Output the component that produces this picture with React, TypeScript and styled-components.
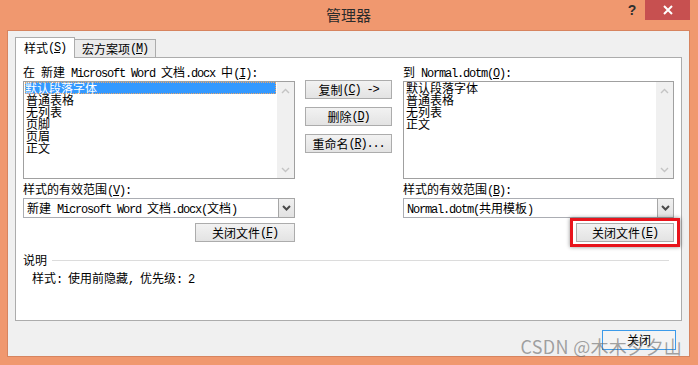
import React from 'react';
import styled, { createGlobalStyle } from 'styled-components';

const GlobalStyle = createGlobalStyle`
  body {
    margin: 0;
    font-family: "Noto Sans CJK SC", "Noto Sans", sans-serif;
    font-size: 12px;
    color: #000;
  }
`;

const Window = styled.div`
  position: relative;
  box-sizing: border-box;
  width: 698px;
  height: 365px;
  padding: 0 8px 8px 7px;
  display: flex;
  flex-direction: column;
  background: #f0986f;
  overflow: hidden;
`;

const TitleBar = styled.div`
  height: 30px;
  flex: none;
  display: grid;
  grid-template-columns: 1fr auto 1fr;
`;

const Title = styled.div`
  grid-column: 2;
  line-height: 30px;
  font-size: 15px;
  color: #2b2b2b;
`;

const Controls = styled.div`
  grid-column: 3;
  display: flex;
  justify-content: flex-end;
  align-items: flex-start;
`;

const HelpGlyph = styled.div`
  width: 26px;
  height: 20px;
  line-height: 20px;
  text-align: center;
  font-family: "Liberation Sans", sans-serif;
  font-weight: bold;
  font-size: 14px;
  color: #2f2f2f;
`;

const CloseBox = styled.div`
  width: 45px;
  height: 20px;
  display: flex;
  align-items: center;
  justify-content: center;
  background: #c75050;
`;

const Body = styled.div`
  flex: 1;
  display: flex;
  flex-direction: column;
  padding: 6px 7px 6px 7px;
  background: #f0f0f0;
  border: 1px solid #d7845f;
`;

const TabStrip = styled.div`
  height: 20px;
  display: flex;
  align-items: flex-end;
`;

const Tab = styled.div<{ $active?: boolean }>`
  box-sizing: border-box;
  position: relative;
  z-index: ${p => (p.$active ? 1 : 0)};
  width: ${p => (p.$active ? 60 : 82)}px;
  height: ${p => (p.$active ? 21 : 18)}px;
  margin-bottom: ${p => (p.$active ? -1 : 0)}px;
  margin-left: ${p => (p.$active ? 0 : -1)}px;
  border: 1px solid #acacac;
  border-bottom: none;
  background: ${p => (p.$active ? '#ffffff' : '#ebebeb')};
  display: flex;
  align-items: center;
  justify-content: center;
  line-height: 12px;
  padding-top: ${p => (p.$active ? 0 : 1)}px;
`;

const Panel = styled.div`
  box-sizing: border-box;
  height: 264px;
  flex: none;
  padding: 8px 6px 0 7px;
  background: #fff;
  border: 1px solid #acacac;
`;

const Columns = styled.div`
  display: grid;
  grid-template-columns: 272px 87px 272px;
  column-gap: 10px;
  align-items: start;
  & > :nth-child(3) {
    margin-left: 1px;
  }
`;

const Column = styled.div`
  display: flex;
  flex-direction: column;
`;

const Label = styled.div<{ $gap?: number }>`
  line-height: 12px;
  height: 12px;
  white-space: nowrap;
  margin-top: ${p => p.$gap ?? 0}px;
  margin-bottom: 3px;
`;

const ListBox = styled.div`
  box-sizing: border-box;
  height: 98px;
  display: flex;
  border: 1px solid #a0a0a0;
  background: #fff;
`;

const Items = styled.div`
  flex: 1;
  padding: 0 1px;
`;

const Item = styled.div<{ $selected?: boolean }>`
  height: 12px;
  line-height: 12px;
  padding-left: ${p => (p.$selected ? 0 : 1)}px;
  white-space: nowrap;
  background: ${p => (p.$selected ? '#3399ff' : 'transparent')};
  color: ${p => (p.$selected ? '#fff' : '#000')};
  outline: ${p => (p.$selected ? '1px dotted #e9a76e' : 'none')};
  outline-offset: -1px;
`;

const ScrollBar = styled.div`
  width: 17px;
  display: flex;
  flex-direction: column;
  justify-content: space-between;
  background: #f0f0f0;
`;

const ArrowCell = styled.div`
  height: 17px;
  display: flex;
  align-items: center;
  justify-content: center;
`;

const Combo = styled.div`
  box-sizing: border-box;
  height: 20px;
  display: flex;
  border: 1px solid #abadb3;
  background: #fff;
`;

const ComboText = styled.div`
  flex: 1;
  padding-left: 3px;
  line-height: 18px;
  white-space: nowrap;
`;

const ComboButton = styled.div`
  box-sizing: border-box;
  width: 17px;
  margin: -1px -1px -1px 0;
  display: flex;
  align-items: center;
  justify-content: center;
  border: 1px solid #a6a6a6;
  background: linear-gradient(#f0f0f0, #e2e2e2);
`;

const Button = styled.div<{ $width?: number; $default?: boolean }>`
  box-sizing: border-box;
  width: ${p => (p.$width ? `${p.$width}px` : '100%')};
  height: 19px;
  display: flex;
  align-items: center;
  justify-content: center;
  white-space: nowrap;
  line-height: 12px;
  border: 1px solid ${p => (p.$default ? '#3c9bea' : '#acacac')};
  background: ${p => (p.$default ? '#f4f4f4' : 'linear-gradient(#f2f2f2, #e3e3e3)')};
`;

const ButtonStack = styled.div`
  padding-top: 14px;
  display: flex;
  flex-direction: column;
  gap: 8px;
`;

const RightAligned = styled.div`
  margin-top: 5px;
  display: flex;
  justify-content: flex-end;
`;

const Highlight = styled.div`
  position: relative;
  &::after {
    content: '';
    position: absolute;
    inset: -5px -6px -5px -6px;
    border: 3px solid #e8141c;
    box-shadow: 0 0 4px rgba(0, 0, 0, 0.45);
    pointer-events: none;
  }
`;

const GroupHeader = styled.div`
  margin-top: 12px;
  display: flex;
  align-items: center;
  gap: 5px;
  line-height: 12px;
  &::after {
    content: '';
    flex: 1;
    height: 1px;
    margin-right: 6px;
    background: #dcdcdc;
  }
`;

const Description = styled.div`
  margin: 6px 0 0 9px;
  line-height: 12px;
`;

const Footer = styled.div`
  padding: 9px 6px 0 0;
  display: flex;
  justify-content: flex-end;
  & > div {
    height: 20px;
  }
`;

const Mono = styled.span`
  font-family: "Liberation Mono", monospace;
  font-size: 12px;
  letter-spacing: -1.2px;
`;

const Watermark = styled.div`
  position: absolute;
  right: 16px;
  bottom: 9px;
  font-size: 18px;
  line-height: 19px;
  letter-spacing: 0.3px;
  color: rgba(105, 105, 105, 0.6);
  white-space: nowrap;
`;

// "&X" marks the accelerator letter, ASCII runs get the half-width face
const caption = (text: string) => {
  const runs: { latin: boolean; u: boolean; text: string }[] = [];
  for (let i = 0; i < text.length; i++) {
    let ch = text[i];
    let u = false;
    if (ch === '&' && i + 1 < text.length) {
      u = true;
      ch = text[++i];
    }
    const latin = ch.charCodeAt(0) < 128;
    const last = runs[runs.length - 1];
    if (last && !u && !last.u && last.latin === latin) last.text += ch;
    else runs.push({ latin, u, text: ch });
  }
  return runs.map((r, i) => {
    const inner = r.u ? <u>{r.text}</u> : r.text;
    return r.latin ? <Mono key={i}>{inner}</Mono> : <React.Fragment key={i}>{inner}</React.Fragment>;
  });
};

const Chevron = ({ up, color, bold }: { up?: boolean; color: string; bold?: boolean }) => (
  <svg width="9" height="6" viewBox="0 0 9 6">
    <polyline
      points={up ? '1,5 4.5,1.5 8,5' : '1,1 4.5,4.5 8,1'}
      fill="none"
      stroke={color}
      strokeWidth={bold ? 2 : 1.4}
    />
  </svg>
);

const StyleList = ({ items, selected }: { items: string[]; selected?: number }) => (
  <ListBox>
    <Items>
      {items.map((it, i) => (
        <Item key={it} $selected={i === selected}>
          {it}
        </Item>
      ))}
    </Items>
    <ScrollBar>
      <ArrowCell>
        <Chevron up color="#c4c4c4" />
      </ArrowCell>
      <ArrowCell>
        <Chevron color="#c4c4c4" />
      </ArrowCell>
    </ScrollBar>
  </ListBox>
);

const ScopeCombo = ({ value }: { value: string }) => (
  <Combo>
    <ComboText>{caption(value)}</ComboText>
    <ComboButton>
      <Chevron color="#4a4a4a" bold />
    </ComboButton>
  </Combo>
);

const leftItems = ['默认段落字体', '普通表格', '无列表', '页脚', '页眉', '正文'];
const rightItems = ['默认段落字体', '普通表格', '无列表', '正文'];

export default function App() {
  return (
    <Window>
      <GlobalStyle />
      <TitleBar>
        <Title>管理器</Title>
        <Controls>
          <HelpGlyph>?</HelpGlyph>
          <CloseBox>
            <svg width="10" height="10" viewBox="0 0 10 10">
              <path d="M1 1 L9 9 M9 1 L1 9" stroke="#fff" strokeWidth="2" />
            </svg>
          </CloseBox>
        </Controls>
      </TitleBar>
      <Body>
        <TabStrip>
          <Tab $active>{caption('样式(&S)')}</Tab>
          <Tab>{caption('宏方案项(&M)')}</Tab>
        </TabStrip>
        <Panel>
          <Columns>
            <Column>
              <Label>{caption('在 新建 Microsoft Word 文档.docx 中(&I):')}</Label>
              <StyleList items={leftItems} selected={0} />
              <Label $gap={4}>{caption('样式的有效范围(&V):')}</Label>
              <ScopeCombo value="新建 Microsoft Word 文档.docx(文档)" />
              <RightAligned>
                <Button $width={100}>{caption('关闭文件(&F)')}</Button>
              </RightAligned>
            </Column>
            <ButtonStack>
              <Button>{caption('复制(&C) ->')}</Button>
              <Button>{caption('删除(&D)')}</Button>
              <Button>{caption('重命名(&R)...')}</Button>
            </ButtonStack>
            <Column>
              <Label>{caption('到 Normal.dotm(&O):')}</Label>
              <StyleList items={rightItems} />
              <Label $gap={4}>{caption('样式的有效范围(&B):')}</Label>
              <ScopeCombo value="Normal.dotm(共用模板)" />
              <RightAligned>
                <Highlight>
                  <Button $width={98}>{caption('关闭文件(&E)')}</Button>
                </Highlight>
              </RightAligned>
            </Column>
          </Columns>
          <GroupHeader>说明</GroupHeader>
          <Description>{caption('样式: 使用前隐藏, 优先级: 2')}</Description>
        </Panel>
        <Footer>
          <Button $width={74} $default>
            关闭
          </Button>
        </Footer>
      </Body>
      <Watermark>CSDN @木木夕夕山</Watermark>
    </Window>
  );
}
